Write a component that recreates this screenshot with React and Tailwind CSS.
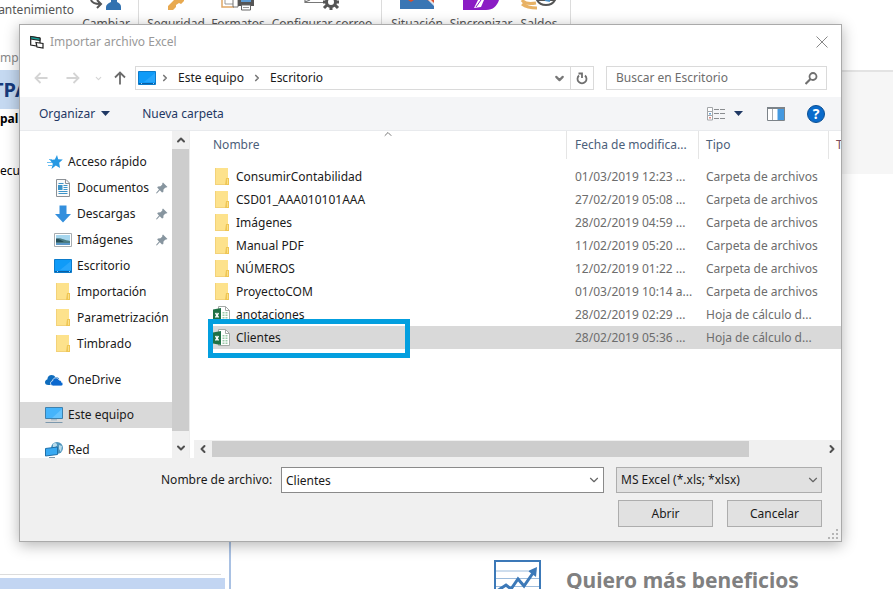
import { ChevronDown, ChevronLeft, ChevronRight, ChevronUp } from "lucide-react";

const files = [
  { name: "ConsumirContabilidad", date: "01/03/2019 12:23 ...", type: "Carpeta de archivos", icon: "folder" },
  { name: "CSD01_AAA010101AAA", date: "27/02/2019 05:08 ...", type: "Carpeta de archivos", icon: "folder" },
  { name: "Imágenes", date: "28/02/2019 04:59 ...", type: "Carpeta de archivos", icon: "folder" },
  { name: "Manual PDF", date: "11/02/2019 05:20 ...", type: "Carpeta de archivos", icon: "folder" },
  { name: "NÚMEROS", date: "12/02/2019 01:22 ...", type: "Carpeta de archivos", icon: "folder" },
  { name: "ProyectoCOM", date: "01/03/2019 10:14 a...", type: "Carpeta de archivos", icon: "folder" },
  { name: "anotaciones", date: "28/02/2019 02:29 ...", type: "Hoja de cálculo d...", icon: "excel" },
  { name: "Clientes", date: "28/02/2019 05:36 ...", type: "Hoja de cálculo d...", icon: "excel", selected: true },
];

const quickAccess = [
  { name: "Documentos", Icon: DocumentIcon, pinned: true },
  { name: "Descargas", Icon: DownloadIcon, pinned: true },
  { name: "Imágenes", Icon: PictureIcon, pinned: true },
  { name: "Escritorio", Icon: DesktopIcon },
  { name: "Importación", Icon: FolderIcon },
  { name: "Parametrización", Icon: FolderIcon },
  { name: "Timbrado", Icon: FolderIcon },
];

/* Icons */
function FolderIcon() {
  return (
    <svg width="18" height="18" viewBox="0 0 18 18" className="shrink-0">
      <path d="M2 0h13v10h1v7H2z" fill="#fde28c" />
      <path d="M2 0h1v17H2zM2 16h11v1H2z" fill="#f3d279" />
      <path d="M13 10h3v7h-4z" fill="#efc654" />
      <path d="M14 11h1v5h-1z" fill="#fbe08a" />
    </svg>
  );
}

function ExcelIcon() {
  return (
    <svg width="18" height="18" viewBox="0 0 18 18" className="shrink-0">
      <path d="M5.500.5h7l4 4v12h-11z" fill="#fff" stroke="#a5aaa7" />
      <path d="M12.500.5v4h4" fill="none" stroke="#a5aaa7" />
      <path d="M9.500 6h2v1.500h-2zM12.500 6h2v1.500h-2zM9.500 8.500h2v1.500h-2zM12.500 8.500h2v1.500h-2zM9.500 11h2v1.500h-2zM12.500 11h2v1.500h-2zM9.500 13.500h2v1.500h-2zM12.500 13.500h2v1.500h-2z" fill="#9bcbaa" />
      <path d="M0 3.500 8 2v14L0 14.500z" fill="#1f7145" />
      <path d="m2.500 7 3 4.500m0-4.500-3 4.500" stroke="#fff" strokeWidth="1.400" />
    </svg>
  );
}

function DocumentIcon() {
  return (
    <svg width="18" height="18" viewBox="0 0 18 18" className="shrink-0">
      <path d="M2.500.5h9.500l3.500 3.500v13.500h-13z" fill="#fafafa" stroke="#8c9196" />
      <path d="M11.500.5V4.500h4" fill="none" stroke="#8c9196" />
      <path d="M4.500 4.500h5M4.500 14.500h9M9.500 6.500h4M9.500 8.500h4M9.500 10.500h4M4.500 12.500h9" stroke="#3d94c9" />
      <path d="M4 6h4.500v5H4z" fill="#3d94c9" />
    </svg>
  );
}

function DownloadIcon() {
  return (
    <svg width="18" height="18" viewBox="0 0 18 18" className="shrink-0">
      <path d="M5.500.5h7V9H17l-8 8.500L1 9h4.500z" fill="#338fdd" />
    </svg>
  );
}

function PictureIcon() {
  return (
    <svg width="18" height="18" viewBox="0 0 18 18" className="shrink-0">
      <path d="M.5 2.500h17v13H.5z" fill="#fff" stroke="#a7acb0" />
      <path d="M2 4h14v10H2z" fill="#a6d6ee" />
      <path d="M2 8c4-2 7 1 14 2v4H2z" fill="#4c7d84" />
      <path d="M2 7.500c3 0 5 2 8 3.500H2z" fill="#264f5a" />
      <path d="M2 12h14v2H2z" fill="#5b97c8" />
    </svg>
  );
}

function DesktopIcon() {
  return (
    <svg width="18" height="18" viewBox="0 0 18 18" className="shrink-0">
      <path d="M.5 2.500h17v13H.5z" fill="#0f9bf8" stroke="#0b7bcb" />
      <path d="M6 13 17 4v9z" fill="#3fb1ff" opacity=".5" />
      <path d="M1 14.500h16" stroke="#0b5fa3" />
      <path d="M3 14.500h1M15 14.500h1" stroke="#9cd3fb" />
    </svg>
  );
}

function StarIcon() {
  return (
    <svg width="16" height="16" viewBox="0 0 16 16" className="shrink-0">
      <path d="m10 1 1.200 4.300 4.600.2-3.600 3.200.8 5.300-4.200-2.500L4.500 15l1.300-5.200L3 6l4.800-.5z" fill="#2799e3" />
      <path d="M2 5.500h3M0 8.500h5M1 11.500h4" stroke="#69bdf0" />
    </svg>
  );
}

function CloudIcon() {
  return (
    <svg width="18" height="18" viewBox="0 0 18 18" className="shrink-0">
      <path d="M3.500 14C.8 14 0 12.500 0 11.200c0-1.500 1-2.600 2.300-2.800C2.500 5.500 4.500 4 6.600 4c1.700 0 3 .8 3.800 2.200 1.800-.4 3.500.7 4 2.300L8 14z" fill="#0f6cbd" />
      <path d="M8.500 15C6.500 15 5.500 13.800 5.500 12.300c0-1.400 1-2.300 2.100-2.500.2-2 1.700-3 3.300-3 1.500 0 2.600.9 3.100 2.200 1.700-.1 2.500 1 2.500 2.200 1 .3 1.500 1 1.500 1.900 0 1-.8 1.900-1.900 1.900z" fill="#0a68cf" stroke="#fff" strokeWidth=".8" />
    </svg>
  );
}

function ComputerIcon() {
  return (
    <svg width="18" height="18" viewBox="0 0 18 18" className="shrink-0">
      <path d="M.5 1.500h17v11H.5z" fill="#45b4fb" stroke="#3d81ae" />
      <path d="M7 12 17 3v9z" fill="#86d1ff" opacity=".5" />
      <path d="M6 13h6v1.500H6z" fill="#a9bccb" />
      <path d="M.5 16.500h17" stroke="#7c98ad" />
    </svg>
  );
}

function NetworkIcon() {
  return (
    <svg width="18" height="18" viewBox="0 0 18 18" className="shrink-0">
      <circle cx="12" cy="7" r="6" fill="#4f95bd" />
      <path d="M8 3c2-2 4-1 4 1s-3 2-4 3zM14 4l3 1-1 6-2-3z" fill="#b9dceb" />
      <path d="M.5 7.500 12.500 6v7.500L.5 15z" fill="#37a9f2" stroke="#1f6fa8" />
      <path d="M4 16.500h6" stroke="#7c98ad" />
    </svg>
  );
}

function PinIcon() {
  return (
    <svg width="12" height="12" viewBox="0 0 12 12" className="shrink-0">
      <path d="m7 .5 4.500 4.500-1.300.6-1 .1L7.500 7.500 7.300 10 6 10.500 3.800 8.300.8 11.500 0 11l3-3.500L1.200 5.500 2 4.500l2.500-.2L6.300 2.500V1.300z" fill="#87959f" />
    </svg>
  );
}

function FormIcon() {
  return (
    <svg width="14" height="14" viewBox="0 0 14 14" className="shrink-0">
      <path d="M.7 1.500 10 3v8.500L.7 10z" fill="#fff" stroke="#222" strokeWidth="1.200" />
      <path d="M.7 1.500 10 3v2.500L.7 4z" fill="#1aa39a" stroke="#222" />
      <path d="M6 7.500 13 8.500v4.500L7 12z" fill="#fff" stroke="#222" strokeWidth="1.200" />
    </svg>
  );
}

function ViewIcon() {
  return (
    <svg width="19" height="16" viewBox="0 0 19 16">
      <path d="M.5 1.500h5v4h-5zM.5 5.500h5v4h-5zM.5 9.500h5v4.500h-5z" fill="#fff" stroke="#a3a6a9" />
      <path d="M2 7h2v1.500H2z" fill="#6aa5d8" />
      <path d="M2 11h2v1.500H2z" fill="#e08a80" />
      <path d="M7 3.500h5M13 3.500h5M7 7.500h5M13 7.500h5M7 12.500h5M13 12.500h5" stroke="#8a8d90" />
    </svg>
  );
}

function PaneIcon() {
  return (
    <svg width="18" height="14" viewBox="0 0 18 14">
      <path d="M.5.5h17v13H.5z" fill="#fff" stroke="#7c8389" />
      <path d="M0 0h18v2H0z" fill="#7c8389" />
      <path d="M5.500 2v11" stroke="#a7adb2" />
      <path d="M10.500 2H17v11h-6.500z" fill="#4499e0" />
    </svg>
  );
}

function Caret() {
  return (
    <svg width="9" height="5" viewBox="0 0 9 5">
      <path d="M0 0h9L4.500 5z" fill="#1f3864" />
    </svg>
  );
}

function Arrow({ className }) {
  return (
    <svg width="14" height="14" viewBox="0 0 14 14" fill="none" stroke="currentColor" className={className}>
      <path d="M13.500 7H1.500M6.500 2 1.500 7l5 5" strokeWidth="1.800" />
    </svg>
  );
}

/* Application window behind the dialog */
function RibbonItem({ label, width, children }) {
  return (
    <div className={`flex flex-col items-center ${width}`}>
      <div className="h-4">{children}</div>
      <span className="whitespace-nowrap leading-4">{label}</span>
    </div>
  );
}

function Ribbon() {
  return (
    <header className="flex h-[70px] shrink-0 text-xs text-[#555]">
      <div className="flex border-r border-[#dcdcdc]">
        <div className="flex w-[74px] flex-col justify-between overflow-hidden pt-0.5 pb-1">
          <span className="flex justify-end leading-4">Mantenimiento</span>
          <span className="-ml-1 leading-4 text-[#888]">Imp</span>
        </div>
        <RibbonItem label="Cambiar" width="w-16">
          <svg width="32" height="11" viewBox="0 0 32 11">
            <path d="M1 0c1 3 4 4 9 4M7 0l4 4-4 4" fill="none" stroke="#555" strokeWidth="2" />
            <path d="M21 0h6v2c3 1 4 3 4 5v3H16V7c0-2 2-4 5-5z" fill="#3272b0" />
          </svg>
        </RibbonItem>
      </div>
      <div className="flex gap-1.5 border-r border-[#dcdcdc] px-2">
        <RibbonItem label="Seguridad" width="w-[58px]">
          <svg width="20" height="11" viewBox="0 0 20 11">
            <path d="M8 0h10v1l-3 3-2-1-3 2v2L7 10H2V6z" fill="#e8a94f" />
          </svg>
        </RibbonItem>
        <RibbonItem label="Formatos" width="w-[54px]">
          <svg width="34" height="11" viewBox="0 0 34 11" fill="none">
            <path d="M1 0v7h12" stroke="#dfa765" strokeWidth="1.500" />
            <path d="M4 0v4h8" stroke="#999" />
            <path d="M12 0v7h5V0" stroke="#777" />
            <path d="M17 0h16v6H17z" fill="#555" />
            <path d="M20 0h10v2H20z" fill="#5d9bd3" />
            <path d="M20.500 5h9v5h-9z" fill="#fff" stroke="#666" />
            <path d="M22 7.500h6" stroke="#999" />
          </svg>
        </RibbonItem>
        <RibbonItem label="Configurar correo" width="w-[102px]">
          <svg width="36" height="11" viewBox="0 0 36 11" fill="none">
            <path d="M1 0v2.500h18M1 2l5-2" stroke="#777" strokeWidth="1.200" />
            <circle cx="27" cy="2" r="4.500" stroke="#555" strokeWidth="3" />
            <path d="M27 6v4M31 5l3 3M23 5l-3 3M32 2h3M19 2h3" stroke="#555" strokeWidth="3" />
          </svg>
        </RibbonItem>
      </div>
      <div className="flex gap-1 border-r border-[#dcdcdc] pr-2.5 pl-2">
        <RibbonItem label="Situación" width="w-[54px]">
          <svg width="34" height="10" viewBox="0 0 34 10">
            <path d="M0 0h34v9H0z" fill="#3a76b4" />
            <path d="M8 0h6l-3 2zM27 0h7v3z" fill="#d9502e" />
            <path d="m24 0 4 0 6 6V3L31 0z" fill="#fff" opacity=".8" />
          </svg>
        </RibbonItem>
        <RibbonItem label="Sincronizar" width="w-[66px]">
          <svg width="36" height="11" viewBox="0 0 36 11">
            <path d="M0 0h36c-2 6-6 10-13 10H0z" fill="#8b1cc4" />
            <path d="m15 0-4 8 7-1 3-7z" fill="#fff" />
            <path d="m18 0-5 7" stroke="#8b1cc4" />
          </svg>
        </RibbonItem>
        <RibbonItem label="Saldos" width="w-[42px]">
          <svg width="36" height="11" viewBox="0 0 36 11" fill="none">
            <path d="M1 0c2 3 8 4 14 3M1 4c4 3 9 4 15 4" stroke="#e8b265" strokeWidth="3" />
            <path d="M16 0a10 9 0 0 0 18 0z" fill="#fff" stroke="#555" strokeWidth="2" />
            <path d="m24 0 5 1" stroke="#4a90c9" strokeWidth="2" />
          </svg>
        </RibbonItem>
      </div>
    </header>
  );
}

function Background() {
  return (
    <div className="flex h-full flex-col">
      <Ribbon />
      <div className="flex flex-1">
        <aside className="w-[231px] shrink-0 border-r-2 border-[#a9c1e3] text-xs text-black">
          <h2 className="flex h-[39px] items-center overflow-hidden bg-[#c5d9f1] text-xl font-bold text-[#163a7c]">
            <span className="-ml-2">TPA</span>
          </h2>
          <p className="pt-0.5 font-bold leading-4">pal</p>
          <p className="pt-9 leading-4">ecu</p>
          <hr className="mt-[395px] mr-2 border-[#dcdcdc]" />
          <div className="mt-[3px] mr-1 h-8 bg-[#c2d5f2]" />
        </aside>
        <main className="flex-1">
          <div className="h-[104px] border-t-2 border-[#e3e3e3] bg-[#f6f6f6]" />
          <section className="flex gap-[25px] pt-[386px] pl-[263px]">
            <svg width="47" height="40" viewBox="0 0 47 40" fill="none" className="shrink-0">
              <path d="M1 1h45v38H1z" stroke="#3c79b8" strokeWidth="2" />
              <path d="M2 11h32M2 18.500h43M2 26.500h43" stroke="#9dbcdc" />
              <path d="m3 31 9-6 5 4 7-10 6 7 9-13" stroke="#3c79b8" strokeWidth="3" />
              <path d="m34 11 9-4-1 10z" fill="#3c79b8" />
            </svg>
            <h1 className="pt-1.5 text-[21px] leading-7 font-bold whitespace-nowrap text-[#808080]">
              Quiero más beneficios
            </h1>
          </section>
        </main>
      </div>
    </div>
  );
}

/* Dialog sections */
function AddressRow() {
  return (
    <div className="flex h-[38px] items-center pr-3.5 pl-3.5 text-xs">
      <button aria-label="Atrás" className="text-[#d4d4d4]"><Arrow /></button>
      <button aria-label="Adelante" className="ml-[18px] text-[#d4d4d4]"><Arrow className="rotate-180" /></button>
      <button aria-label="Ubicaciones recientes" className="ml-3.5 text-[#d4d4d4]"><ChevronDown size={9} strokeWidth={3} /></button>
      <button aria-label="Subir" className="ml-2.5 text-[#6b6b6b]"><Arrow className="rotate-90" /></button>
      <div className="ml-2 flex h-6 flex-1 items-center border border-[#dadada]">
        <nav className="flex flex-1 items-center pl-0.5">
          <DesktopIcon />
          <ChevronRight size={10} strokeWidth={4} className="ml-1 text-[#777]" />
          <a href="#equipo" className="ml-2">Este equipo</a>
          <ChevronRight size={10} strokeWidth={4} className="mx-2 text-[#777]" />
          <a href="#escritorio">Escritorio</a>
        </nav>
        <button aria-label="Ubicaciones anteriores" className="px-1 text-[#777]"><ChevronDown size={13} strokeWidth={4} /></button>
        <button aria-label="Actualizar" className="flex h-full w-[23px] items-center justify-center border-l border-[#dadada]">
          <svg width="12" height="13" viewBox="0 0 12 13" fill="none" stroke="#707070" strokeWidth="1.800">
            <path d="M3 3.500a4.500 4.500 0 1 0 6 0" />
            <path d="M2.500 1.500H6v4.500" />
          </svg>
        </button>
      </div>
      <div className="ml-3 flex h-6 w-[221px] items-center border border-[#dadada] pr-2 pl-[9px]">
        <input
          aria-label="Buscar en Escritorio"
          placeholder="Buscar en Escritorio"
          className="min-w-0 flex-1 outline-none placeholder:text-[#6d6d6d]"
        />
        <svg width="13" height="13" viewBox="0 0 13 13" fill="none" stroke="#707070">
          <circle cx="8" cy="4.500" r="3.500" strokeWidth="1.800" />
          <path d="m5.500 7-5 5" strokeWidth="2.200" />
        </svg>
      </div>
    </div>
  );
}

function Toolbar() {
  return (
    <div className="flex h-[34px] items-center border-b border-[#e8eaed] bg-[#f4f5f7] pr-4 pl-[19px] text-xs text-[#1f3864]">
      <button className="flex items-center gap-1.5">Organizar <Caret /></button>
      <button className="ml-8">Nueva carpeta</button>
      <button aria-label="Cambiar la vista" className="ml-auto"><ViewIcon /></button>
      <button aria-label="Más opciones" className="ml-2"><Caret /></button>
      <button aria-label="Panel de vista previa" className="mr-0.5 ml-6"><PaneIcon /></button>
      <button aria-label="Ayuda" className="ml-5 size-[18px] rounded-full border border-[#0b4f93] bg-[#0a6bcb] text-sm leading-4 font-bold text-white">
        ?
      </button>
    </div>
  );
}

function TreeItem({ name, Icon, pinned, child, selected, className = "" }) {
  return (
    <li className={className}>
      <button
        className={`flex h-[26px] w-full items-center gap-[5px] text-left ${child ? "pl-[34px]" : "pl-[25px]"} ${
          selected ? "bg-[#d9d9d9]" : ""
        }`}
      >
        <Icon />
        <span className="flex-1 whitespace-nowrap">{name}</span>
        {pinned && <span className="mr-1"><PinIcon /></span>}
      </button>
    </li>
  );
}

function Sidebar() {
  return (
    <div className="flex w-[170px] shrink-0 border-r border-[#ececec]">
      <ul className="h-[327px] w-[152px] overflow-hidden pt-[18px] text-xs">
        <TreeItem name="Acceso rápido" Icon={StarIcon} className="pl-0.5" />
        {quickAccess.map((item) => (
          <TreeItem key={item.name} {...item} child />
        ))}
        <TreeItem name="OneDrive" Icon={CloudIcon} className="mt-2.5" />
        <TreeItem name="Este equipo" Icon={ComputerIcon} selected className="mt-[9px]" />
        <TreeItem name="Red" Icon={NetworkIcon} className="mt-[9px]" />
      </ul>
      <div className="flex w-[17px] flex-col items-center bg-[#f0f0f0] text-[#505050]">
        <button aria-label="Subir" className="flex h-[18px] items-center"><ChevronUp size={12} strokeWidth={4} /></button>
        <div className="h-[282px] w-full bg-[#cdcdcd]" />
        <button aria-label="Bajar" className="flex flex-1 items-center pb-0.5 pt-2"><ChevronDown size={12} strokeWidth={4} /></button>
      </div>
    </div>
  );
}

function FileTable() {
  return (
    <table className="w-full table-fixed text-xs">
      <colgroup>
        <col />
        <col className="w-[132px]" />
        <col className="w-[130px]" />
        <col className="w-3" />
      </colgroup>
      <thead>
        <tr className="h-[34px] text-left align-top text-[#4c607a]">
          <th className="relative p-0 font-normal">
            <div className="h-7 border-r border-[#e5e5e5] pl-[5px] leading-7">Nombre</div>
            <div className="absolute inset-x-0 -top-[3px] flex justify-center text-[#777]">
              <ChevronUp size={12} />
            </div>
          </th>
          <th className="p-0 font-normal">
            <div className="h-7 border-r border-[#e5e5e5] pl-2 leading-7 whitespace-nowrap">Fecha de modifica...</div>
          </th>
          <th className="p-0 font-normal">
            <div className="h-7 border-r border-[#e5e5e5] pl-[7px] leading-7">Tipo</div>
          </th>
          <th className="p-0 font-normal">
            <div className="overflow-hidden pl-[7px] leading-7 text-[#7a4a5c]">T</div>
          </th>
        </tr>
      </thead>
      <tbody>
        {files.map((file) => (
          <tr key={file.name} className={file.selected ? "h-[23px] bg-[#d9d9d9]" : "h-[23px]"}>
            <td className="relative p-0">
              <div className="flex items-center gap-[5px] pl-[5px]">
                {file.icon === "folder" ? <FolderIcon /> : <ExcelIcon />}
                <span>{file.name}</span>
              </div>
              {file.selected && (
                <div className="absolute -top-[7px] left-0 h-[39px] w-[202px] border-5 border-[#039fdf]" />
              )}
            </td>
            <td className="p-0 pl-2 whitespace-nowrap text-[#6d6d6d]">{file.date}</td>
            <td className="p-0 pl-[7px] whitespace-nowrap text-[#6d6d6d]">{file.type}</td>
            <td className="p-0" />
          </tr>
        ))}
      </tbody>
    </table>
  );
}

function FileList() {
  return (
    <div className="flex min-w-0 flex-1 flex-col justify-between overflow-hidden">
      <div className="pl-[18px]">
        <FileTable />
      </div>
      <div className="ml-1 flex h-[18px] items-center bg-[#f0f0f0] text-[#505050]">
        <button aria-label="Izquierda" className="flex w-[18px] justify-center"><ChevronLeft size={12} strokeWidth={4} /></button>
        <div className="mr-[74px] h-4 flex-1 bg-[#cdcdcd]" />
        <button aria-label="Derecha" className="flex w-[18px] justify-center"><ChevronRight size={12} strokeWidth={4} /></button>
      </div>
    </div>
  );
}

function Footer() {
  return (
    <div className="relative bg-[#f0f0f0] pt-[9px] pr-[19px] pb-3.5 text-xs">
      <div className="flex h-[26px] items-center">
        <label htmlFor="filename" className="ml-[141px] w-[115px] whitespace-nowrap">Nombre de archivo:</label>
        <div className="ml-[5px] flex h-full flex-1 items-center border border-[#8a8a8a] bg-white pr-0.5">
          <input id="filename" defaultValue="Clientes" className="h-full min-w-0 flex-1 pl-1 outline-none" />
          <button aria-label="Nombres anteriores" className="text-[#666]"><ChevronDown size={14} /></button>
        </div>
        <div className="ml-3 grid h-full w-[206px] items-center">
          <select
            aria-label="Tipo de archivo"
            className="col-start-1 row-start-1 h-full w-full appearance-none border border-[#adadad] bg-[#e1e1e1] pl-1"
          >
            <option>MS Excel (*.xls; *xlsx)</option>
          </select>
          <ChevronDown size={14} className="pointer-events-none col-start-1 row-start-1 mr-0.5 justify-self-end text-[#666]" />
        </div>
      </div>
      <div className="mt-[7px] flex justify-end gap-3.5">
        <button className="h-[27px] w-[95px] border border-[#adadad] bg-[#e1e1e1]">Abrir</button>
        <button className="h-[27px] w-[95px] border border-[#adadad] bg-[#e1e1e1]">Cancelar</button>
      </div>
      <svg width="10" height="10" viewBox="0 0 10 10" className="absolute right-[3px] bottom-0.5" fill="#b5b5b5">
        <path d="M8 0h2v2H8zM4 4h2v2H4zM8 4h2v2H8zM0 8h2v2H0zM4 8h2v2H4zM8 8h2v2H8z" />
      </svg>
    </div>
  );
}

export default function App() {
  return (
    <div className="relative h-screen overflow-hidden bg-white font-['Noto_Sans','Open_Sans',sans-serif]">
      <Background />
      <div
        role="dialog"
        aria-labelledby="dialog-title"
        className="absolute top-6 right-[51px] left-[19px] border border-[#aaa] bg-white text-[#1a1a1a] shadow-[0_3px_14px_rgba(0,0,0,0.3)]"
      >
        <div className="flex h-[34px] items-center gap-1.5 pr-[13px] pl-2.5 text-xs text-[#999]">
          <FormIcon />
          <h2 id="dialog-title" className="flex-1">Importar archivo Excel</h2>
          <button aria-label="Cerrar">
            <svg width="12" height="12" viewBox="0 0 12 12" stroke="#888">
              <path d="m.5.5 11 11m0-11-11 11" />
            </svg>
          </button>
        </div>
        <AddressRow />
        <Toolbar />
        <div className="flex">
          <Sidebar />
          <FileList />
        </div>
        <Footer />
      </div>
    </div>
  );
}
